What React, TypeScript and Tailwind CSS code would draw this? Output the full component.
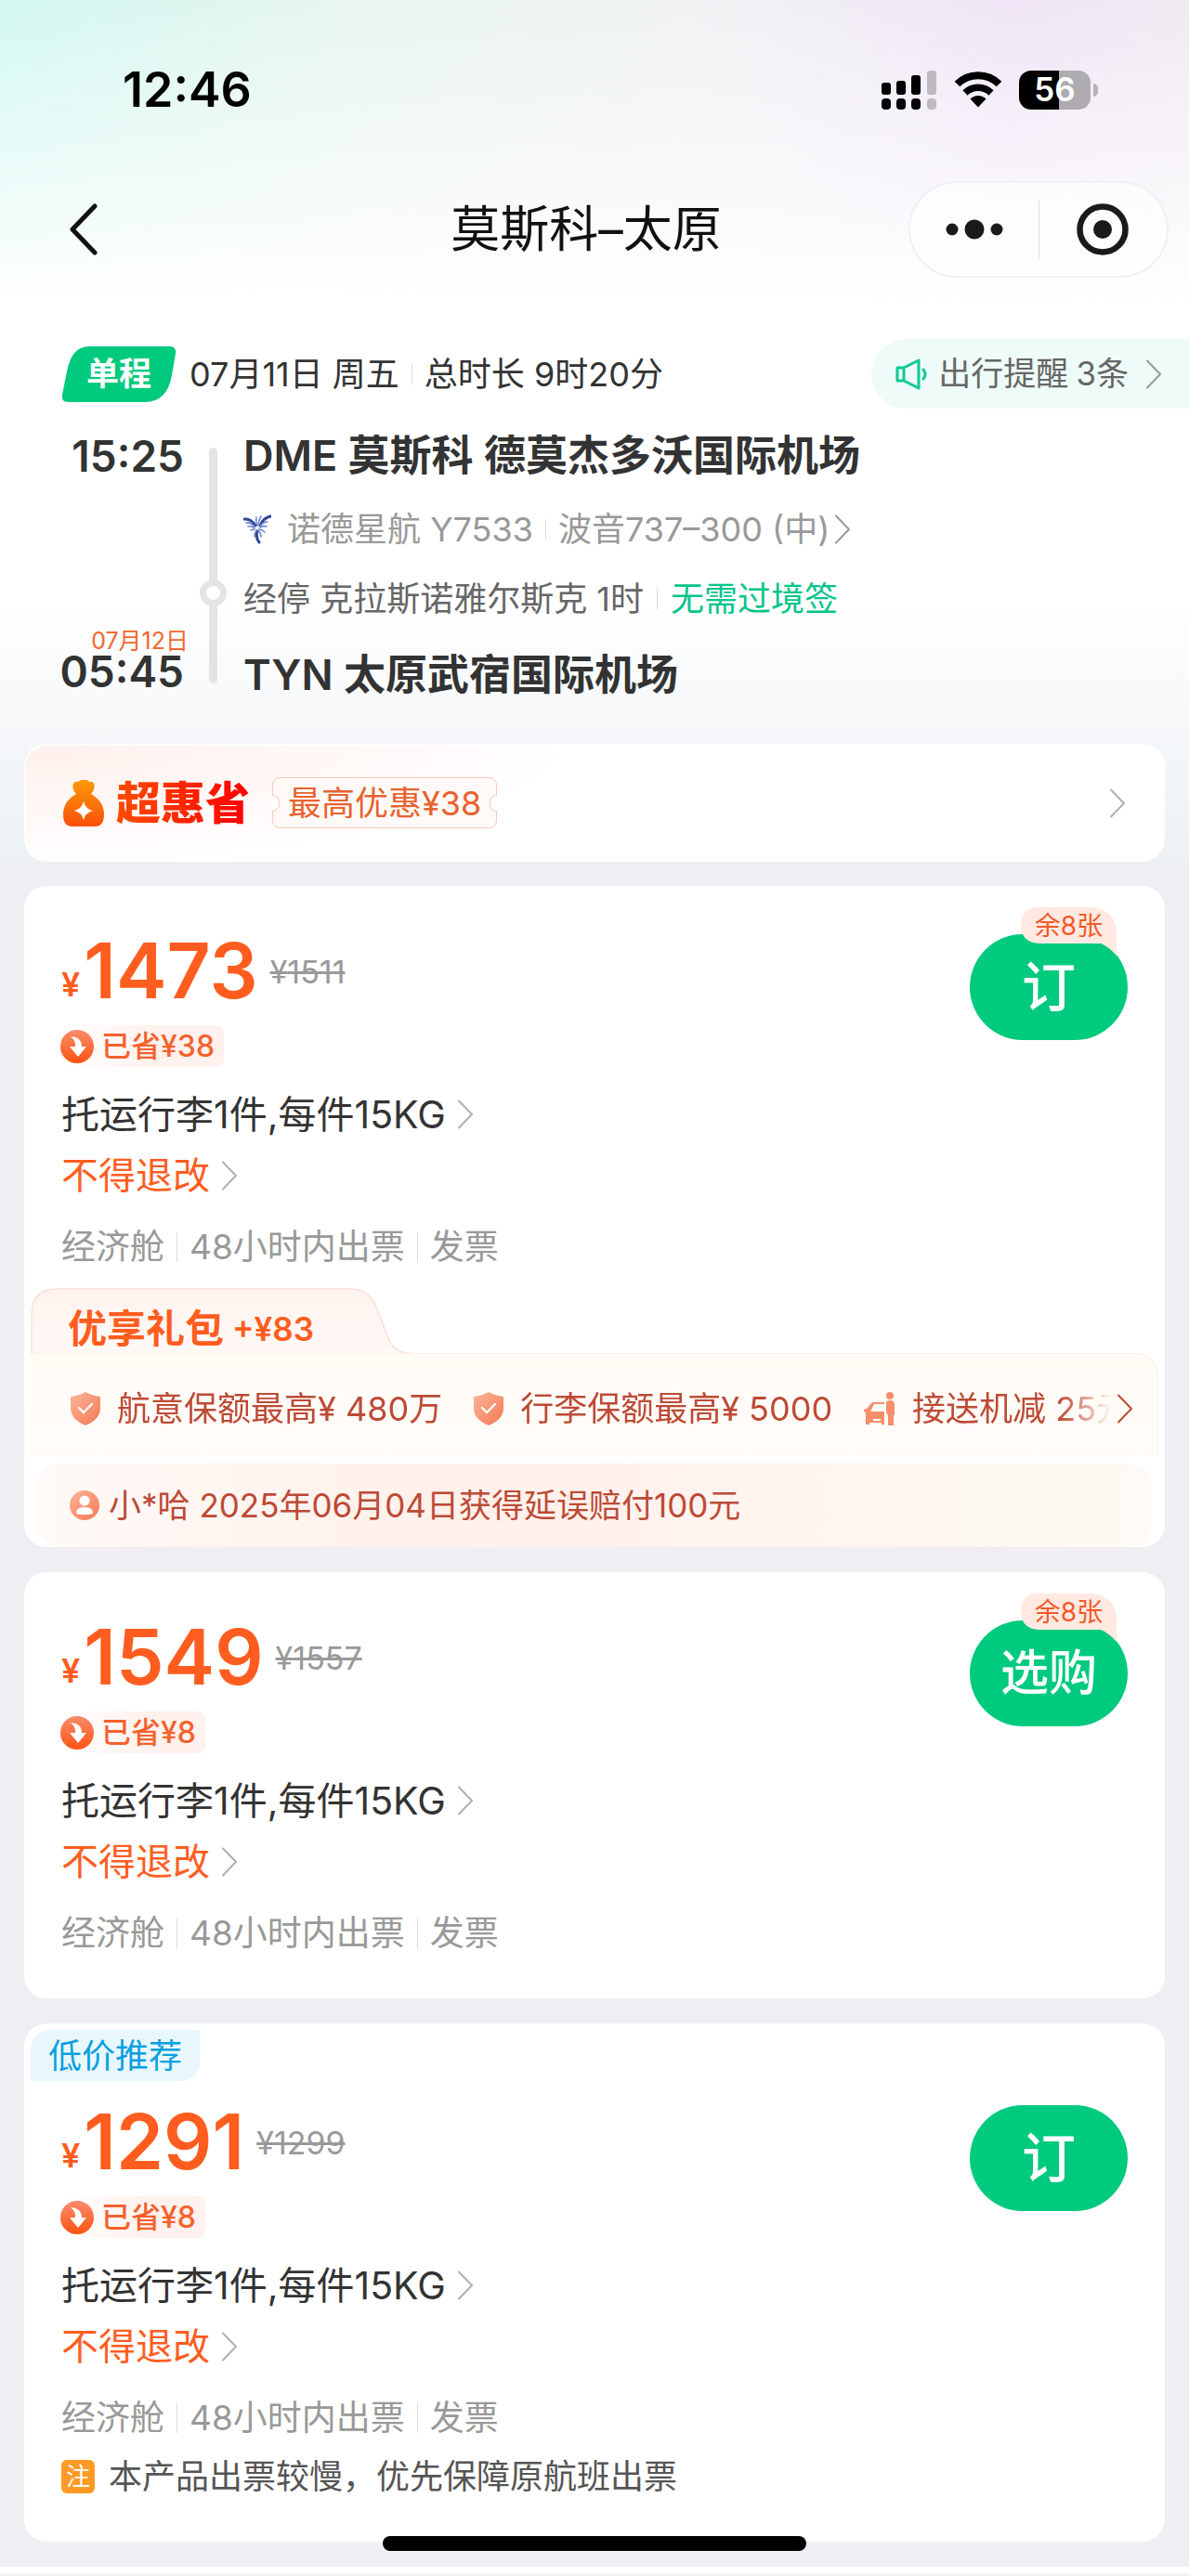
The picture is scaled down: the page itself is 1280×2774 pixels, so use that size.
import type { ReactNode } from "react";

type Fare = {
  price: number;
  was: number;
  saved: number;
  action: string;
  left?: string;
  tag?: string;
  note?: string;
  gift?: boolean;
};

const FARES: Fare[] = [
  { price: 1473, was: 1511, saved: 38, action: "订", left: "余8张", gift: true },
  { price: 1549, was: 1557, saved: 8, action: "选购", left: "余8张" },
  {
    price: 1291,
    was: 1299,
    saved: 8,
    action: "订",
    tag: "低价推荐",
    note: "本产品出票较慢，优先保障原航班出票",
  },
];

function Chevron({ className = "text-[#b0b0b0]" }: { className?: string }) {
  return (
    <svg
      viewBox="0 0 18 32"
      className={`h-8 w-[18px] shrink-0 ${className}`}
      fill="none"
      stroke="currentColor"
      strokeWidth="2"
      strokeLinecap="round"
      strokeLinejoin="round"
    >
      <path d="M2 1.5 16 16 2 30.5" />
    </svg>
  );
}

function Divider({ className = "mx-[13px] h-8" }: { className?: string }) {
  return <span className={`w-px shrink-0 bg-[#dcdcdc] ${className}`} />;
}

function StatusBar() {
  return (
    <div className="flex h-[193px] items-center justify-between pr-[98px] pl-[132px] text-black">
      <span className="text-[52px] font-semibold">12:46</span>
      <div className="flex items-center gap-[18px]">
        <svg viewBox="0 0 60 42" className="h-[42px] w-[60px]">
          <g fill="#000">
            <rect x="0" y="13" width="10" height="13" rx="3" />
            <rect x="16" y="11" width="10" height="15" rx="3" />
            <rect x="32" y="5" width="10" height="21" rx="3" />
            <rect x="0" y="30" width="10" height="12" rx="4" />
            <rect x="16" y="30" width="10" height="12" rx="4" />
            <rect x="32" y="30" width="10" height="12" rx="4" />
          </g>
          <g fill="#bdbbc0">
            <rect x="49" y="0" width="10" height="26" rx="3" />
            <rect x="49" y="30" width="10" height="12" rx="4" />
          </g>
        </svg>
        <svg viewBox="0 0 52 39" className="h-[39px] w-[52px]" fill="none" stroke="#000">
          <path d="M3.5 13.5a32 32 0 0 1 45 0" strokeWidth="8" />
          <path d="M12 23a20 20 0 0 1 28 0" strokeWidth="7.5" />
          <path d="M17.5 29.5a12 12 0 0 1 17 0L26 38.5Z" fill="#000" stroke="none" />
        </svg>
        <div className="flex items-center">
          <span className="flex h-[42px] w-[77px] items-center justify-center rounded-[13px] bg-[linear-gradient(90deg,#000_56%,#aeacb0_56%)] text-[35px] font-semibold text-white">
            56
          </span>
          <span className="ml-[3px] h-[14px] w-[5px] rounded-r-full bg-[#b5b3b7]" />
        </div>
      </div>
    </div>
  );
}

function NavBar() {
  return (
    <div className="mt-[2px] grid grid-cols-[1fr_auto_1fr] items-center pr-[22px] pl-1">
      <button aria-label="返回" className="ml-[69px] justify-self-start">
        <svg viewBox="0 0 34 56" className="h-14 w-[34px]" fill="none" stroke="#111" strokeWidth="5" strokeLinecap="round" strokeLinejoin="round">
          <path d="M29 3 5 28l24 25" />
        </svg>
      </button>
      <h1 className="text-[53px] leading-[60px] text-[#111]">莫斯科–太原</h1>
      <div className="flex h-[104px] w-[280px] items-center justify-self-end rounded-full border-2 border-[#f0f0f1] bg-white/60">
        <button aria-label="更多" className="flex flex-1 justify-center">
          <svg viewBox="0 0 64 24" className="h-6 w-16" fill="#1a1a1a">
            <circle cx="8" cy="12" r="6.5" />
            <circle cx="32" cy="12" r="10.5" />
            <circle cx="56" cy="12" r="6.5" />
          </svg>
        </button>
        <Divider className="h-16" />
        <button aria-label="关闭" className="flex flex-1 justify-center">
          <svg viewBox="0 0 56 56" className="h-14 w-14" fill="none" stroke="#1a1a1a">
            <circle cx="28" cy="28" r="24.5" strokeWidth="6.5" />
            <circle cx="28" cy="28" r="10" fill="#1a1a1a" stroke="none" />
          </svg>
        </button>
      </div>
    </div>
  );
}

function TripSummary() {
  return (
    <div className="mt-[66px] flex h-[75px] items-center pl-[66px] text-[36px]">
      <span className="relative flex h-[60px] w-[124px] items-center justify-center">
        <svg viewBox="0 0 124 60" className="absolute inset-0 h-full w-full" fill="#00ca7e">
          <path d="M30 0H117Q124 0 123 8L119 31Q114 60 90 60H7Q0 60 1 52L6 27Q11 0 30 0Z" />
        </svg>
        <span className="relative text-[35px] font-semibold text-white">单程</span>
      </span>
      <span className="ml-[14px] text-[#333]">07月11日 周五</span>
      <Divider className="mx-[13px] h-[22px]" />
      <span className="text-[#333]">总时长 9时20分</span>
      <button className="ml-auto flex h-full items-center rounded-l-full bg-[#eefbf8] pr-[29px] pl-[26px] text-[35px] text-[#666]">
        <svg viewBox="0 0 34 34" className="mr-[12px] h-[34px] w-[34px]" fill="none" stroke="#0fc994" strokeWidth="3" strokeLinejoin="round" strokeLinecap="round">
          <path d="M2 10h7v14H2ZM9 10 25 2v30L9 24" />
          <path d="M30 12q4 5 0 10" />
        </svg>
        出行提醒
        <span className="ml-[8px]">3条</span>
        <Chevron className="ml-[18px] text-[#999]" />
      </button>
    </div>
  );
}

// three feathered wings meeting in the middle
function AirlineMark() {
  return (
    <svg viewBox="0 0 30 32" className="h-8 w-[30px] shrink-0" fill="none" strokeLinecap="round">
      <g stroke="#2f459b" strokeWidth="3">
        <path d="M1 5q7-1 12 7" />
        <path d="M29 2q-8 2-11 10" />
        <path d="M17 30q-4-5-2-12" />
      </g>
      <g stroke="#7387cb" strokeWidth="1.6">
        <path d="M3 9q5-1 9 4M5 13q4-1 7 2M8 17q2-1 4-1" />
        <path d="M14 3q-1 5 1 9M19 2q-3 5-3 9M26 8q-5 0-8 5M25 13q-4-1-7 1" />
        <path d="M12 24q0-4 2-7M19 24q0-4-3-7M23 19q-3-3-6-3" />
      </g>
    </svg>
  );
}

function Itinerary() {
  return (
    <div className="mt-[21px] flex pl-[62px] text-[#333]">
      <div className="flex w-[141px] flex-col items-end justify-between pb-[13px]">
        <span className="pr-[5px] text-[46px] leading-[60px] font-semibold">15:25</span>
        <div className="flex flex-col items-end">
          <span className="text-[25px] leading-6 text-[#f2672f]">07月12日</span>
          <span className="pr-[5px] text-[46px] leading-[42px] font-semibold">05:45</span>
        </div>
      </div>
      <div className="relative mr-[28px] ml-[22px] my-[21px] w-[9px] rounded-full bg-[#e4e4e4]">
        <span className="absolute top-[142px] -left-[10px] h-[29px] w-[29px] rounded-full border-[7px] border-[#e4e4e4] bg-white" />
      </div>
      <div className="flex min-w-0 flex-1 flex-col text-[36px] leading-[50px]">
        <h2 className="text-[45px] leading-[60px] font-semibold">DME 莫斯科 德莫杰多沃国际机场</h2>
        <button className="mt-6 flex items-center text-[#999]">
          <AirlineMark />
          <span className="ml-[17px]">诺德星航 Y7533</span>
          <Divider className="mx-[13px] h-[22px]" />
          波音737–300 (中)
          <Chevron className="ml-[5px] text-[#999]" />
        </button>
        <div className="mt-[25px] flex items-center text-[#666]">
          经停 克拉斯诺雅尔斯克 1时
          <Divider className="mx-[14px] h-[22px]" />
          <span className="text-[#06c48b]">无需过境签</span>
        </div>
        <h2 className="mt-[27px] text-[45px] leading-[60px] font-semibold">TYN 太原武宿国际机场</h2>
      </div>
    </div>
  );
}

function PromoBar() {
  return (
    <button className="mx-[26px] mt-11 flex h-[127px] items-center rounded-3xl border-2 border-white bg-white bg-[radial-gradient(ellipse_600px_130px_at_0_0,#fff0ec,#ffffff)] pr-10 pl-10">
      <svg viewBox="0 0 44 50" className="h-[50px] w-11">
        <defs>
          <linearGradient id="bag" x1="0" y1="0" x2="0" y2="1">
            <stop offset="0" stopColor="#fb9a06" />
            <stop offset="1" stopColor="#fb4f09" />
          </linearGradient>
        </defs>
        <path
          d="M14 15Q9 9 11 4q1-3 5-2 3-3 6-2 4-1 6 2 4-1 5 2 2 5-3 11 14 8 14 22 0 13-10 13H10Q0 50 0 37 0 23 14 15Z"
          fill="url(#bag)"
        />
        <path d="M22 23q2 8 10 10-8 2-10 10-2-8-10-10 8-2 10-10Z" fill="#fff" />
      </svg>
      <span className="ml-[13px] bg-[linear-gradient(90deg,#ff4d00,#ff0000)] bg-clip-text text-[48px] leading-[60px] font-black text-transparent">
        超惠省
      </span>
      <span className="relative ml-[24px] flex h-[55px] items-center rounded-lg border border-[#f6cbb8] bg-[#fffaf7] px-4 text-[36px] text-[#e8622f]">
        <span className="absolute top-[18px] -left-px h-[18px] w-[8px] rounded-r-full border border-l-0 border-[#f6cbb8] bg-white" />
        最高优惠¥38
        <span className="absolute top-[18px] -right-px h-[18px] w-[8px] rounded-l-full border border-r-0 border-[#f6cbb8] bg-white" />
      </span>
      <Chevron className="ml-auto text-[#b0b0b0]" />
    </button>
  );
}

function PeachGradient({ id }: { id: string }) {
  return (
    <linearGradient id={id} x1="0" y1="0" x2="1" y2="1">
      <stop offset="0" stopColor="#fcb498" />
      <stop offset="1" stopColor="#f47a55" />
    </linearGradient>
  );
}

function ShieldIcon() {
  return (
    <svg viewBox="0 0 32 36" className="h-9 w-8 shrink-0">
      <defs>
        <PeachGradient id="shield" />
      </defs>
      <path d="M16 0q7 4 16 5v14q-1 11-16 17Q1 30 0 19V5Q9 4 16 0Z" fill="url(#shield)" />
      <path d="m9 17 5 5 9-9" fill="none" stroke="#fff" strokeWidth="2.4" strokeLinecap="round" />
    </svg>
  );
}

function PickupIcon() {
  return (
    <svg viewBox="0 0 34 36" className="h-9 w-[34px] shrink-0" fill="#f58f6a">
      <path d="M0 19q3-1 4-2l4-5q1-1 3-1h11v2H11l-4 8h15v14h-3v-2H6v2H2V22l-2-1Z" />
      <circle cx="28" cy="4" r="4" />
      <path d="M24 12q0-3 4-3 5 0 5 4v12h-1v11h-6V25q-2-2-2-5Z" />
      <path d="M10 30h8" stroke="#fff" strokeWidth="2" />
    </svg>
  );
}

function Benefit({ icon, children }: { icon: ReactNode; children: ReactNode }) {
  return (
    <li className="flex shrink-0 items-center gap-[18px] whitespace-nowrap">
      {icon}
      {children}
    </li>
  );
}

function GiftPack() {
  return (
    <div className="mt-[19px] px-[7px] text-[36px] leading-[50px] text-[#bd4a35]">
      <div className="relative flex h-[70px] w-[408px] items-center pt-[18px] pl-10 font-semibold text-[#ff5d1f]">
        <svg viewBox="0 0 408 70" className="absolute inset-0 h-full w-full">
          <defs>
            <linearGradient id="tab" x1="0" y1="0" x2="0" y2="1">
              <stop offset="0" stopColor="#fff3ef" />
              <stop offset="1" stopColor="#fff9f6" />
            </linearGradient>
          </defs>
          <path
            d="M1 70V28Q1 1 28 1H342C358 1 366 7 371 18L385 54Q391 70 408 70"
            fill="url(#tab)"
            stroke="#fbdfd6"
            strokeWidth="1.5"
          />
        </svg>
        <span className="relative text-[42px]">优享礼包</span>
        <span className="relative ml-[9px] text-[35px]">+¥83</span>
      </div>
      <div className="flex h-[111px] items-center rounded-tr-3xl bg-[linear-gradient(#fffcf6,#fffbf9)] pt-2 pr-[27px] pl-[43px] shadow-[inset_-1px_1px_0_#fdeee8]">
        <ul className="flex min-w-0 flex-1 gap-[34px] overflow-hidden [mask-image:linear-gradient(90deg,#000_93%,transparent_98%)]">
          <Benefit icon={<ShieldIcon />}>航意保额最高¥ 480万</Benefit>
          <Benefit icon={<ShieldIcon />}>行李保额最高¥ 5000</Benefit>
          <Benefit icon={<PickupIcon />}>接送机减 25元</Benefit>
        </ul>
        <button aria-label="查看礼包" className="-ml-[18px]">
          <Chevron className="text-[#bd4a35]" />
        </button>
      </div>
      <div className="mx-[7px] mt-2 flex h-[90px] items-center rounded-3xl bg-[linear-gradient(90deg,#fffaf7,#fff0ea_35%,#fff3ef_60%,#fffaf5)] pl-[35px] text-[35px]">
        <svg viewBox="0 0 32 32" className="h-8 w-8">
          <defs>
            <PeachGradient id="user" />
          </defs>
          <circle cx="16" cy="16" r="16" fill="url(#user)" />
          <circle cx="16" cy="11" r="5.5" fill="#fff" />
          <path d="M7 24q0-6 9-6t9 6q0 2-9 2t-9-2Z" fill="#fff" />
        </svg>
        <span className="ml-[10px]">小*哈 2025年06月04日获得延误赔付100元</span>
      </div>
    </div>
  );
}

function BuyButton({ action, left }: { action: string; left?: string }) {
  return (
    <div className="relative shrink-0">
      <button
        className={`flex h-[114px] w-[170px] items-center justify-center rounded-full bg-[#00ca7e] font-medium text-white ${
          action.length > 1 ? "text-[52px]" : "text-[58px]"
        }`}
      >
        {action}
      </button>
      {left && (
        <span className="absolute -top-[29px] right-[12px] flex h-[39px] w-[103px] items-center justify-center text-[28px] text-[#f15a29]">
          <svg viewBox="0 0 103 53" className="absolute top-0 left-0 h-[53px] w-[103px]" fill="#ffe9e1">
            <path d="M20 0H76Q103 2 103 30V52Q94 42 86 39H20Q0 38 0 19 0 0 20 0Z" />
          </svg>
          <span className="relative">{left}</span>
        </span>
      )}
    </div>
  );
}

function SavedBadge({ amount }: { amount: number }) {
  return (
    <div className="mt-[18px] -ml-px flex h-[45px] items-center self-start rounded-lg bg-[linear-gradient(90deg,#ffffff,#fff1ed_60%)] pr-[10px] text-[32px] font-medium text-[#f4622d]">
      <svg viewBox="0 0 36 36" className="h-9 w-9">
        <defs>
          <linearGradient id="saved" x1="0" y1="0" x2="0" y2="1">
            <stop offset="0" stopColor="#f98c6c" />
            <stop offset="1" stopColor="#ff5311" />
          </linearGradient>
        </defs>
        <circle cx="18" cy="18" r="18" fill="url(#saved)" />
        <path d="M11 7q12 1 12 11h5l-9 11-9-11h6q1-6-5-11Z" fill="#fff" />
      </svg>
      <span className="ml-[8px]">已省¥{amount}</span>
    </div>
  );
}

function FareCard({ fare }: { fare: Fare }) {
  return (
    <section className="mx-[26px] overflow-hidden rounded-3xl bg-white">
      {fare.tag && (
        <div className="mt-[7px] ml-[7px] flex h-[55px] w-[182px] items-center justify-center rounded-tl-[20px] rounded-br-[20px] bg-[#e8f7fe] text-[36px] text-[#0a9fe0]">
          {fare.tag}
        </div>
      )}
      <div className={`flex items-start justify-between px-10 ${fare.tag ? "pt-[26px]" : "pt-[52px]"}`}>
        <div className="flex flex-col">
          <div className="flex h-20 items-center text-[#ff5d1f]">
            <span className="mt-[28px] text-[36px] font-semibold">¥</span>
            <span className="ml-[4px] text-[82px] leading-[80px] font-semibold">{fare.price}</span>
            <del className="ml-[13px] text-[34px] text-[#999]">¥{fare.was}</del>
          </div>
          <SavedBadge amount={fare.saved} />
          <button className="mt-[26px] flex items-center gap-3 text-[41px] leading-[50px] text-[#333]">
            托运行李1件,每件15KG
            <Chevron />
          </button>
          <button className="mt-4 flex items-center gap-3 text-[40px] leading-[50px] text-[#ff5d1f]">
            不得退改
            <Chevron />
          </button>
          <div className="mt-[27px] flex items-center text-[37px] leading-[50px] text-[#999]">
            经济舱
            <Divider />
            48小时内出票
            <Divider />
            发票
          </div>
        </div>
        <BuyButton action={fare.action} left={fare.left} />
      </div>
      {fare.note && (
        <div className="mt-[13px] flex items-center pl-10 text-[36px] leading-[50px] text-[#555]">
          <span className="mr-[15px] flex h-9 w-9 items-center justify-center rounded-md bg-[#ff9a26] text-[26px] text-white">
            注
          </span>
          {fare.note}
        </div>
      )}
      {fare.gift ? <GiftPack /> : <div className="h-[45px]" />}
    </section>
  );
}

export default function App() {
  return (
    <div className="bg-[#eeeef3] font-['Inter','Noto_Sans_CJK_SC',sans-serif]">
      <div className="flex flex-col bg-[linear-gradient(180deg,transparent,#ffffff_330px,#ffffff_640px,#ecf1f4),linear-gradient(90deg,#d2f8f2,#e8f5ee_30%,#f1f1f4_62%,#efe5f6_85%,#f0eaf2)]">
        <StatusBar />
        <NavBar />
        <TripSummary />
        <Itinerary />
        <PromoBar />
      </div>
      <main className="mt-[26px] flex flex-col gap-[27px]">
        {FARES.map((fare) => (
          <FareCard key={fare.price} fare={fare} />
        ))}
      </main>
      <div className="flex h-[27px] justify-center">
        <span className="-mt-[6px] h-4 w-[456px] rounded-full bg-black" />
      </div>
      {/* top edge of the next block */}
      <div className="h-[10px] border-b-[3px] border-[#f3f3f3] bg-white" />
    </div>
  );
}
